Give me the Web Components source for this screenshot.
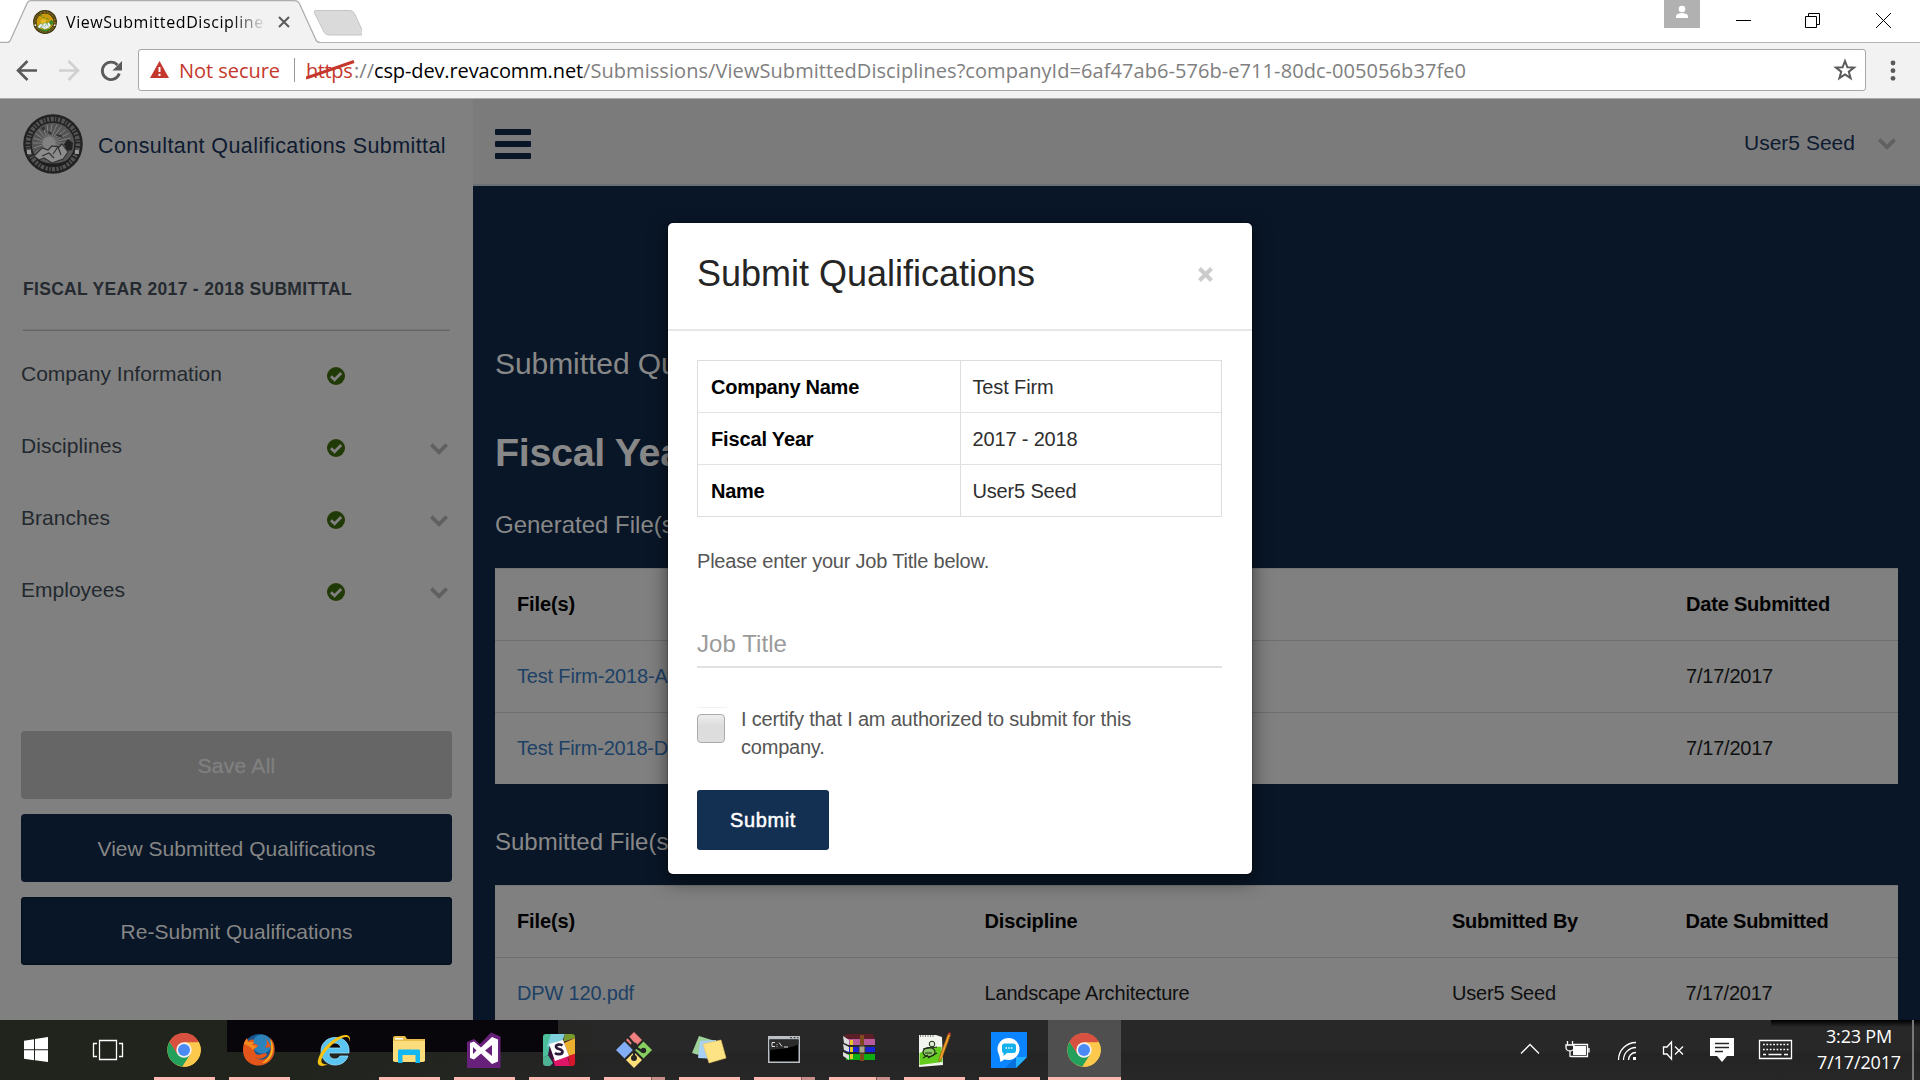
<!DOCTYPE html>
<html lang="en">
<head>
<meta charset="utf-8">
<title>ViewSubmittedDisciplines</title>
<style>
html,body{margin:0;padding:0}
body{width:1920px;height:1080px;overflow:hidden;background:#fff;font-family:"Liberation Sans",Arial,sans-serif;position:relative}
</style>
</head>
<body>
<app-window></app-window>
<script>
function define(name, html, setup){
  const t=document.createElement('template');
  t.innerHTML=html;
  customElements.define(name, class extends HTMLElement{
    constructor(){
      super();
      this.attachShadow({mode:'open'}).appendChild(t.content.cloneNode(true));
    }
    connectedCallback(){ if(setup) setup(this,this.shadowRoot); }
  });
}

define('seal-icon', `
<style>:host{display:block;line-height:0}svg{display:block;width:100%;height:100%}</style>
<svg viewBox="0 0 60 60">
 <circle cx="30" cy="30" r="29.8" style="fill:var(--rim,#222)"/>
 <circle cx="30" cy="30" r="25" fill="none" stroke-width="4.6" stroke-dasharray="2.2 1.5 3.2 1.2 1.4 1.6" style="stroke:var(--lettering,#545454)"/>
 <circle cx="30" cy="30" r="21.3" style="fill:var(--field,#555)"/>
 <g id="rays" stroke-width="1" style="stroke:var(--ray,#808080)"></g>
 <circle cx="26" cy="29" r="6.5" style="fill:var(--sun,#828282)"/>
 <path d="M18 14l3-2 1 3-2 2zM24 17l4 1 1 3-3-1zM33 20l5 1 2 3-6-2z" style="fill:var(--isle,#333)"/>
 <path d="M41 30l4-5 5 4-1 7-5 1z" style="fill:var(--isle,#222)"/>
 <path d="M11 42l8-8 6 2 4-4 7 1 3-3 6 8-5 7-11 4-8-5-5 2z" stroke-width="1.2" style="fill:var(--cloud,#8c8c8c);stroke:var(--isle,#333)"/>
 <path d="M19 42l7-3 5 5M30 40l5-7 3 8" fill="none" stroke-width="1.2" style="stroke:var(--isle,#333)"/>
 <path d="M14 45c8 5 20 7 33 0-3 5-9 8-17 8s-13-3-16-8z" style="fill:var(--isle,#1e1e1e)"/>
 <path d="M4 36h4v4H4zM52 36h4v4h-4z" style="fill:var(--cloud,#999)"/>
</svg>`, (h,s)=>{
  let o='';
  for(let i=0;i<24;i++){const a=i*Math.PI/12;o+='<line x1="26" y1="29" x2="'+(29+19*Math.cos(a)).toFixed(1)+'" y2="'+(29+19*Math.sin(a)).toFixed(1)+'"/>';}
  s.getElementById('rays').innerHTML=o;
});

define('chevron-icon', `
<style>:host{display:block;width:18px;height:12px;color:#5f6062}svg{display:block}</style>
<svg width="18" height="12" viewBox="0 0 18 12"><path d="M2.6.3 9 6.5 15.4.3 18 3 9 11.7 0 3z" fill="currentColor"/></svg>`);

define('tab-strip', `
<style>
:host{display:flex;height:43px;background:linear-gradient(#b4b4b4,#b4b4b4) 0 42px/100% 1px no-repeat #fff;justify-content:space-between}
.l{display:flex}
.tab{display:grid;width:320px;height:43px}
.tab>*{grid-area:1/1}
.c{display:flex;align-items:center;padding:0 0 1px 33px}
seal-icon{width:24px;height:24px;margin-top:2px;--rim:#3a300c;--lettering:#8a7526;--field:#c9980c;--ray:#d2a312;--sun:#e3bb2a;--isle:#2c8a2c;--cloud:#eee}
.t{width:199px;margin-left:9px;margin-top:1px;overflow:hidden;font:16px/24px "Open Sans","Noto Sans",sans-serif;color:#000;-webkit-mask-image:linear-gradient(90deg,#000 165px,transparent 200px)}
.x{margin-left:13px;margin-top:2px}
.r{display:flex}
svg{display:block}
</style>
<div class="l"><div class="tab">
<svg width="320" height="43"><path d="M0 43V42.5H8.5C9.5 42 10 41 10.5 40L27 3.5C28 1.5 29 .7 31 .7H294c3 0 4.500 1 5.500 3L316 40c.6 1.500 1.500 2.500 3 2.500V43z" fill="#f2f2f2"/><path d="M0 42.500H7.500C9.500 42.500 10 41 10.500 40L27 3.500C28 1.500 29 .7 31 .7H294c3 0 4.500 1 5.500 3L316 40c.6 1.500 1.500 2.500 4 2.500" fill="none" stroke="#aeaeae" stroke-width="1.300"/></svg>
<div class="c"><seal-icon></seal-icon><div class="t"><fit-text w="206">ViewSubmittedDisciplines</fit-text></div>
<svg class="x" width="12" height="12"><path d="M1 1l10 10M11 1L1 11" stroke="#5a5a5a" stroke-width="2"/></svg></div>
</div>
<svg width="50" height="43" style="margin-left:-8px"><path d="M4 10.500H37c3 0 4.500 1 5.500 3L51 32c.7 2-.3 3-2 3H18c-3 0-5-1-6-3L2.500 13C1.500 11 2.500 10.500 4 10.500z" fill="#dadada" stroke="#c4c4c4"/></svg></div>
<div class="r">
<svg width="256" height="43" fill="none" stroke="#000" stroke-width="1"><path d="M0 0h36v28H0z" fill="#b1b1b1" stroke="none"/><circle cx="18" cy="9" r="3.300" fill="#fff" stroke="none"/><path d="M12 18v-2c0-2 4-3 6-3s6 1 6 3v2z" fill="#fff" stroke="none"/><path d="M72 20.500h15M141.500 16.500h11v11h-11zM144.500 16.500v-3h11v11h-3M212 13l15 15M227 13l-15 15"/></svg>
</div>`);

define('nav-toolbar', `
<style>
:host{display:flex;align-items:center;height:55px;background:#f2f2f2;border-bottom:1px solid #ababab;font:20px/28px "Open Sans","Noto Sans",sans-serif}
.f{display:flex;align-items:center;box-sizing:border-box;width:1728px;height:42px;border:1px solid #a6a6a6;border-radius:3px;background:#fff;margin-left:14px;margin-top:-1px}
fit-text{padding-top:1px}
.ns{color:#c5372c;margin-left:9px}
.sep{width:1px;height:24px;background:#999;margin:0 11px 0 14px}
.h{display:grid}.h>*{grid-area:1/1}.h{color:#c5372c}
.g{color:#808080}.b{color:#000}
svg{display:block;flex:none}
.w{flex:1}
</style>
<svg width="124" height="54" fill="none" stroke-width="2.600"><path d="M37 26.500H19M27.500 17l-9.500 9.500 9.500 9.500" stroke="#5a5a5a"/><path d="M59 26.500H77M68.500 17l9.500 9.500-9.500 9.500" stroke="#d0d0d0"/><path d="M117.500 21A8.700 8.700 0 1 0 119.300 29.500" stroke="#5a5a5a" stroke-width="2.800"/><path d="M122 17v9.500h-9.500z" fill="#5a5a5a"/></svg>
<div class="f">
<svg width="21" height="18" style="margin-left:10px"><path d="M10.500 0L20 17H1z" fill="#c5372c"/><path d="M10.500 6v5M10.500 12.700v2.200" stroke="#fff" stroke-width="2"/></svg>
<fit-text class="ns" w="101">Not secure</fit-text><span class="sep"></span>
<div class="h"><fit-text w="48">https</fit-text><svg width="50" height="28"><path d="M0 22L48 5.500" stroke="#c5372c" stroke-width="3"/></svg></div>
<fit-text class="g" w="20" style="margin-left:-2px">://</fit-text><fit-text class="b" w="209">csp-dev.revacomm.net</fit-text><fit-text class="g" w="883">/Submissions/ViewSubmittedDisciplines?companyId=6af47ab6-576b-e711-80dc-005056b37fe0</fit-text>
<span class="w"></span>
<svg width="24" height="24" style="margin-right:8px"><path d="M12 3l2.400 6.300 6.600.3-5.200 4.100 1.800 6.500L12 16.500l-5.600 3.700 1.800-6.500L3 9.600l6.600-.3z" fill="none" stroke="#5a5a5a" stroke-width="2"/></svg>
</div>
<svg width="54" height="54" fill="#5a5a5a"><circle cx="27" cy="19" r="2.400"/><circle cx="27" cy="26.700" r="2.400"/><circle cx="27" cy="34.300" r="2.400"/></svg>`);

define('nav-item', `
<style>
:host{display:flex;align-items:center;height:72px;font-size:21px;line-height:28px;color:#23292f}
.l{width:306px}
.k{margin-top:4px;display:block}
chevron-icon{margin:6px 0 0 85px}
:host([leaf]) chevron-icon{display:none}
</style>
<div class="l"><slot></slot></div>
<svg class="k" width="18" height="18" viewBox="0 0 18 18"><circle cx="9" cy="9" r="9" fill="#1f3a06"/><path d="M4 9.300l3.500 3.400 6.700-6.700" fill="none" stroke="#808080" stroke-width="2.900"/></svg>
<chevron-icon></chevron-icon>`);

define('side-button', `
<style>
:host{display:flex;align-items:center;justify-content:center;box-sizing:border-box;height:68px;padding-top:3px;border-radius:4px;background:#091627;color:#868686;font-size:21px;line-height:28px;margin-bottom:15px}
:host([disabled]){background:#666;color:#808080;-webkit-text-stroke:.3px #808080}
:host([active]){box-shadow:inset 0 0 0 1.500px #05121e}
</style><slot></slot>`);

define('side-bar', `
<style>
:host{display:block;box-sizing:border-box;width:473px;height:921px;background:#808080;padding:0 21px;overflow:hidden}
.brand{display:flex;height:88px;align-items:center;color:#0d1a30;font-size:21.500px;line-height:28px}
.brand seal-icon{width:60px;height:60px;margin:1px 0 0 2px}
.brand fit-text{margin:6px 0 0 15px}
.fy{font-weight:bold;font-size:17.500px;line-height:20px;color:#242a30;padding:91.500px 0 30px 2px}
.hr{height:1px;background:#666;border-top:1px solid #747474;margin:0 2px 7px}
.btns{margin-top:105px}
</style>
<div class="brand"><seal-icon></seal-icon><fit-text w="348">Consultant Qualifications Submittal</fit-text></div>
<div class="fy"><fit-text w="329">FISCAL YEAR 2017 - 2018 SUBMITTAL</fit-text></div>
<div class="hr"></div>
<nav-item leaf><fit-text w="201">Company Information</fit-text></nav-item>
<nav-item><fit-text w="101">Disciplines</fit-text></nav-item>
<nav-item><fit-text w="89">Branches</fit-text></nav-item>
<nav-item><fit-text w="104">Employees</fit-text></nav-item>
<div class="btns">
<side-button disabled><fit-text w="78">Save All</fit-text></side-button>
<side-button><fit-text w="278">View Submitted Qualifications</fit-text></side-button>
<side-button active><fit-text w="232">Re-Submit Qualifications</fit-text></side-button>
</div>`);

define('top-bar', `
<style>
:host{display:flex;align-items:center;box-sizing:border-box;height:87px;background:#7b7b7b;border-bottom:2px solid #6c7176;padding:2px 24px 0 22px;color:#0d1a30;font-size:21px;line-height:28px}
.m{display:flex;flex-direction:column;gap:6px;width:36px;margin-top:2px}
.m i{height:6px;background:#081627;border-radius:1px}
.u{margin-left:auto}
chevron-icon{margin:2px 0 0 23px}
</style>
<div class="m"><i></i><i></i><i></i></div><fit-text class="u" w="111">User5 Seed</fit-text><chevron-icon></chevron-icon>`);

define('table-row', `
<style>
:host{display:flex;box-sizing:border-box;height:72px;align-items:center;border-top:1px solid #6e6e6e;color:#0f0f0f;font-size:20px;line-height:28px}
:host([head]){font-weight:bold;color:#000;border-top-color:#747474}
::slotted(*){box-sizing:border-box;padding-left:22px;flex-shrink:0;white-space:nowrap;margin-bottom:2px}
::slotted(.a){width:467.500px}::slotted(.w){width:1169px}::slotted(.h){width:233.500px}
::slotted(.link){color:#1d4066}
</style><slot></slot>`);

define('main-view', `
<style>
:host{display:block;flex:1;height:921px;background:#091627;overflow:hidden;color:#888}
.c{padding:0 22px}
.h1{font-size:30px;line-height:40px;padding-top:158px}
.h2{font-size:39.500px;line-height:50px;font-weight:bold;padding-top:43px;letter-spacing:-.35px}
.h3{font-size:24px;line-height:30px;padding-top:33px}
.t{background:#808080;margin-top:28px;height:216px;overflow:hidden}
.s{font-size:24px;line-height:30px;padding-top:43px}
</style>
<top-bar></top-bar>
<div class="c">
<div class="h1"><fit-text w="322">Submitted Qualifications</fit-text></div>
<div class="h2">Fiscal Year 2017 - 2018</div>
<div class="h3">Generated File(s)</div>
<div class="t">
<table-row head><div class="w"><fit-text w="58">File(s)</fit-text></div><div class="h"><fit-text w="144">Date Submitted</fit-text></div></table-row>
<table-row><div class="w link"><fit-text w="156">Test Firm-2018-Af</fit-text></div><div class="h"><fit-text w="87">7/17/2017</fit-text></div></table-row>
<table-row><div class="w link"><fit-text w="151">Test Firm-2018-D</fit-text></div><div class="h"><fit-text w="87">7/17/2017</fit-text></div></table-row>
</div>
<div class="s">Submitted File(s)</div>
<div class="t">
<table-row head><div class="a"><fit-text w="58">File(s)</fit-text></div><div class="a"><fit-text w="93">Discipline</fit-text></div><div class="h"><fit-text w="126">Submitted By</fit-text></div><div class="h"><fit-text w="143">Date Submitted</fit-text></div></table-row>
<table-row><div class="a link"><fit-text w="117">DPW 120.pdf</fit-text></div><div class="a"><fit-text w="205">Landscape Architecture</fit-text></div><div class="h"><fit-text w="104">User5 Seed</fit-text></div><div class="h"><fit-text w="87">7/17/2017</fit-text></div></table-row>
</div>
</div>`);

define('submit-dialog', `
<style>
:host{display:block;position:absolute;left:668px;top:223px;width:584px;height:651px;background:#fff;border-radius:5px;box-shadow:0 6px 19px rgba(0,0,0,.55),0 0 2px rgba(0,0,0,.5);color:#555;font-size:20px;line-height:28px}
.hd{display:flex;box-sizing:border-box;height:108px;padding:31px 39px 0 29px;justify-content:space-between;border-bottom:2px solid #e7e7e7;color:#252525;font-size:36px;line-height:40px}
.x{margin-top:13px;display:block}
.bd{padding:29px 29px 0}
.tb{border:1px solid #ddd;box-sizing:border-box;width:525px}
.r{display:flex;height:51px;border-top:1px solid #e2e2e2;line-height:52px}
.r:first-child{border-top:0}
.r>*{box-sizing:border-box;padding-left:13px;width:50%}
.r b{color:#000}.r span{color:#2e2e2e;border-left:1px solid #ddd;padding-left:12px}
.p{margin-top:30px}
.in{margin-top:47px;width:525px;height:44px;border-bottom:2px solid #e2e2e2;font-size:24px;line-height:44px;color:#9b9b9b}
.ck{display:flex;margin-top:38px}
.ct{margin-top:-1px}
.box{width:30px;height:46px;border-top:1.500px solid #f1f1f1;margin-top:1px;margin-right:14px;box-sizing:border-box;padding-top:6px}
.box i{display:block;box-sizing:border-box;width:28px;height:29px;border:1.500px solid #aaa;border-radius:4px;background:linear-gradient(#eee,#dcdcdc 40%,#dedede)}
.b{display:flex;align-items:center;justify-content:center;width:132px;height:60px;margin-top:29px;border-radius:3px;background:#132f52;color:#fff;-webkit-text-stroke:.5px #fff}
</style>
<div class="hd"><fit-text w="338">Submit Qualifications</fit-text><svg class="x" width="15" height="15"><path d="M1.500 1.500l12 12M13.500 1.500l-12 12" stroke="#ccc" stroke-width="4.200"/></svg></div>
<div class="bd">
<div class="tb">
<div class="r"><b><fit-text w="148">Company Name</fit-text></b><span><fit-text w="81">Test Firm</fit-text></span></div>
<div class="r"><b><fit-text w="102.500">Fiscal Year</fit-text></b><span><fit-text w="105">2017 - 2018</fit-text></span></div>
<div class="r"><b><fit-text w="53.500">Name</fit-text></b><span><fit-text w="104">User5 Seed</fit-text></span></div>
</div>
<div class="p"><fit-text w="292">Please enter your Job Title below.</fit-text></div>
<div class="in"><fit-text w="90">Job Title</fit-text></div>
<div class="ck"><div class="box"><i></i></div><div class="ct"><fit-text w="390">I certify that I am authorized to submit for this</fit-text><br><fit-text w="83.500">company.</fit-text></div></div>
<div class="b"><fit-text w="66">Submit</fit-text></div>
</div>`);

const chrome='<circle cx="18" cy="18" r="16.700" fill="#fcc94d"/><path d="M18 18L3.500 9.700A16.700 16.700 0 0 1 32.500 9.700z" fill="#d8503f"/><path d="M3.500 9.700A16.700 16.700 0 0 0 16.500 34.600L24.500 22 10.500 20z" fill="#23a05c"/><path d="M18 10.200H32.800A16.700 16.700 0 0 0 3.500 9.700l7.600 12z" fill="#d8503f"/><path d="M18 10.200H32.800A16.700 16.700 0 0 1 16.500 34.600L24.700 22z" fill="#fcc94d"/><circle cx="18" cy="18" r="7.700" fill="#f4f0ec"/><circle cx="18" cy="18" r="6" fill="#4a8af4"/>';
const icons={
chrome,
firefox:'<circle cx="18" cy="17.500" r="15.500" fill="#15568f"/><circle cx="21" cy="12" r="9.500" fill="#2b83bd"/><path d="M20 3c7 3 7 9 4 13l5-1c2-3 1-8-1-10 5 4 6 9 5.500 14-1 9-8 14.500-16 14.500C8 33.500 2 26.500 2 18c0-6 2-10 4-12l1 3c2-1 4-2 6-1l-1 3 5 2c0 2-2 3-4 4 0 5 4 7 8 5 3-1 5-1 5 1-3 4-9 5-12 2 5 5 13 3 15-5 2-6-1-12-9-17z" fill="#e2561c"/><path d="M29 7c4 5 4 14 0 19-2 3-5 5-8 5 9-6 11-13 8-24z" fill="#f9b61c"/><path d="M3 12c1-3 2-4 3-5l1 3 6 0-2 3 5 1c-1 2-3 2-4 4-2-3-6-5-9-6z" fill="#f58a1f"/>',
ie:'<path d="M19 5.500c-8 0-14 6-14 13.500S11 33 19 33c6 0 11-3 13-9h-8c-1 2-3 3-5 3-3 0-6-2-6-6h20C34 11 28 5.500 19 5.500zM13 16c0-3 3-5 6-5s5 2 6 5z" fill="#5bc5f2" stroke="#9ae0fb" stroke-width=".8"/><path d="M33.500 10c2-6-2-8.500-9-6C14 8 4 19 2 28c-1.500 7 5 7 10 4-5 1-8-1-6-6C9 18 19 9 26 6c5-2 8-1 7.500 4z" fill="#f7c211"/>',
folder:'<path d="M2 6c0-1 .6-2 2-2h10l2 3H34v22H2z" fill="#e8bd49"/><path d="M2 9h32v19c0 1-1 2-2 2H4c-1 0-2-1-2-2z" fill="#fbdd7c"/><path d="M4 6h8v1.500H4z" fill="#fff"/><path d="M7 31V19c0-1 .6-1.500 1.500-1.500h19c1 0 1.500.5 1.500 1.500v12h-4.500v-8H11.500v8z" fill="#12b8f2"/>',
vs:'<path d="M1 10l7-3 6 5L25 .500l9.500 4V36H1z" fill="#68217a"/><path d="M4 11l4-1.500 7 6L26 5l6 2.500v22L26 32 15 21.500l-7 6L4 26zM7 15v7l3.500-3.500zM26 13l-7 5.500 7 5.500z" fill="#fff" fill-rule="evenodd"/>',
slack:'<rect x="2" y="2" width="32" height="32" rx="3" fill="#3a1238"/><path d="M2 5c0-2 1-3 3-3h6L7 23 2 26z" fill="#4cc09c"/><path d="M10 2h14l-3 8-15 5z" fill="#7fcfdc"/><path d="M24 2h7c2 0 3 1 3 3v1l-12 4z" fill="#799a2c"/><path d="M34 6v16l-6 2-5-13z" fill="#ebb02d"/><path d="M2 26l5-3 5 8-3 3H5c-2 0-3-1-3-3z" fill="#4cb493"/><path d="M12 27l14-4 3 11H14z" fill="#df1567"/><path d="M27 24l7-2v9c0 2-1 3-3 3h-2z" fill="#d8172c"/><path d="M8 12l14-4 6 16-14 5z" fill="#fff"/><path d="M21.500 13.500c-2-1.500-6.500-1.500-6.500 1.300s6.500 1.700 6.500 4.900-5.500 3-7.500 1.200" fill="none" stroke="#2b1a38" stroke-width="2.700"/>',
git:'<path d="M18 0l8 8-8 8-8-8z" fill="#f08080"/><path d="M27.500 9.500l8.500 8.500-8.500 8.500L19 18z" fill="#87cf5e"/><path d="M18 20l8 8-8 8-8-8z" fill="#fee07a"/><path d="M8.500 9.500L17 18l-8.500 8.500L0 18z" fill="#83adf7"/><path d="M12 5l6 7v15M18 14l9 6" stroke="#262626" stroke-width="2.200" fill="none"/><circle cx="18" cy="14" r="3.400" fill="#262626"/><circle cx="27.500" cy="18.500" r="2.700" fill="#262626"/><circle cx="18" cy="26" r="3" fill="#262626"/>',
notes:'<path d="M8 4l16 5-6 17L1 21z" fill="#9fd29a"/><path d="M9 9l16-1-1 19-17-1z" fill="#a9d0f5"/><path d="M12 12l18-4 5 18-17 5z" fill="#fde384" stroke="#e8c860" stroke-width=".6"/>',
cmd:'<path d="M2 4h32v27H2z" fill="#b9bfc4"/><path d="M3.500 7.500h29v22h-29z" fill="#000"/><path d="M3.500 7.500h29v5C22 17 14 17 3.500 18z" fill="#2b2b2b"/><path d="M9 10.500H6v4h3M11 12v.8M11 14v.8M13 10.500l3 4M18 15h4" stroke="#ddd" fill="none"/><path d="M24 5.700h2M27.500 5.700h2M31 5.700h1.500" stroke="#333"/>',
rar:'<path d="M3 3l5-1h24l2 7H5z" fill="#5c1f28"/><path d="M6 7h28v6H6z" fill="#b85a9c"/><path d="M5 15h29v5H5z" fill="#1820d8"/><path d="M5 22h29v6H5z" fill="#0cae14"/><path d="M2 4l6 4v5l-5-2zM2 12l6 3v5l-5-2zM2 20l6 3v5l-6-4z" fill="#ddd"/><path d="M9 8h3v5H9zM9 15h3v5H9zM9 22h3v5H9z" fill="#e3c62a"/><path d="M19 3h4v26h-4z" fill="#7c4a1e"/><path d="M18 14h6v7h-6z" fill="#a9a288" stroke="#333"/>',
npp:'<path d="M3 3h17l6 2 1 28-24 2z" fill="#f2f5ee"/><path d="M3.500 21c7-2 13-7 22-6l1 15-23 3z" fill="#64cc1e"/><path d="M4 4h15" stroke="#888" stroke-width="2" stroke-dasharray="1 1.500"/><ellipse cx="13" cy="20" rx="6" ry="4.500" fill="#8cc765" stroke="#1e2c14" stroke-width="1.200"/><circle cx="16" cy="12" r="2.800" fill="#dcead2" stroke="#1e2c14"/><path d="M7 17l14-2M7 26l5-3M12 26l9-5M9 21h7" stroke="#1e2c14" stroke-width="1.200" fill="none"/><path d="M32 2l2.500 1L26 26l-3 4 .5-5z" fill="#f09e28" stroke="#8a4d12" stroke-width=".6"/><path d="M32 2l.8-1.800 2.400 1L34.500 3z" fill="#c43a2a"/>',
chat:'<path d="M0 0h36v25L25 36H0z" fill="#0a84ff"/><path d="M25 25v11H14z" fill="#0670dc"/><path d="M25 25h11L25 36z" fill="#22b0ff"/><circle cx="17.500" cy="17" r="11" fill="#fff"/><path d="M8 22l1.500 8 6-4z" fill="#fff"/><path d="M13.500 11.500h9c1.500 0 2.500 1 2.500 2.500v4.500c0 1.500-1 2.500-2.500 2.500H16l-3.500 3v-3c-1 0-1.500-1-1.500-2.500V14c0-1.500 1-2.500 2.500-2.500z" fill="#12b1ee"/><path d="M14.500 16h7" stroke="#fff" stroke-width="1.500" stroke-dasharray="1.500 1.200"/>'
};

define('task-icon', `
<style>
:host{display:flex;flex-direction:column;align-items:center;box-sizing:border-box;width:75px;height:60px;padding-top:12px}
svg{display:block;width:36px;height:36px;margin-right:2px}
.u{display:flex;width:61px;height:3px;background:#fdb9b2;margin-top:9px;justify-content:flex-end}
:host([nobar]) .u{visibility:hidden}
:host([multi]) .u{background:linear-gradient(90deg,#fdb9b2 47px,#7f5c5a 47px,#7f5c5a 48px,#c98f8b 48px)}
:host([active]){width:73px;margin:0 1px;background:#4f4f4f}
:host([active]) .u{width:73px}
</style><svg viewBox="0 0 36 36"></svg><div class="u"></div>`, (h,s)=>{ s.querySelector('svg').innerHTML=icons[h.getAttribute('icon')]; });

define('task-bar', `
<style>
:host{display:flex;height:60px;color:#fff;font:19px/26px "Open Sans","Noto Sans",sans-serif;
background:linear-gradient(#08060a,#08060a) 227px 0/331px 32px no-repeat,linear-gradient(#000,rgba(30,30,30,0)) 1771px 0/149px 7px no-repeat,linear-gradient(90deg,rgba(32,36,28,1) 0,rgba(32,36,28,1) 240px,rgba(32,36,28,0) 640px),linear-gradient(#282828 32px,#242424 33px,#272727)}
svg{display:block;flex:none}
.tray{margin-left:auto;display:flex}
.clock{box-sizing:border-box;width:94px;padding-left:4px;text-align:center;padding-top:3px;font-size:18px}
.end{border-left:2px solid #777;margin-left:8px;padding-right:6px}
</style>
<svg width="147" height="60"><path d="M24 20.700l10-1.500v10H24zM35 19l13-2v12.200H35zM24 30.200h10v10l-10-1.400zM35 30.200h13V42l-13-1.700z" fill="#fff"/><path d="M99.500 20.500h17v19h-17zM97 23.500h-3.500v13H97M119 23.500h3.500v13H119" fill="none" stroke="#fff" stroke-width="1.300"/></svg>
<task-icon icon="chrome"></task-icon><task-icon icon="firefox"></task-icon><task-icon icon="ie" nobar></task-icon><task-icon icon="folder"></task-icon><task-icon icon="vs"></task-icon><task-icon icon="slack"></task-icon><task-icon icon="git" multi></task-icon><task-icon icon="notes"></task-icon><task-icon icon="cmd" multi></task-icon><task-icon icon="rar" multi></task-icon><task-icon icon="npp"></task-icon><task-icon icon="chat"></task-icon><task-icon icon="chrome" active></task-icon>
<div class="tray">
<svg width="300" height="60" viewBox="1510 0 300 60" fill="none" stroke="#fff" stroke-width="1.300">
<path d="M1521 33.500l9-9 9 9"/>
<path d="M1570.500 36.500h17v-12h-15M1589 28v4.500"/><path d="M1573 26h13v9h-13z" fill="#fff" stroke="none"/><path d="M1566 25h8v2.500c0 2-2 3.500-4 3.500s-4-1.500-4-3.500zM1567.500 25v-4M1572.500 25v-4M1570 31v6"/>
<path d="M1618.500 40c0-10 8-17.500 17.500-17.500M1623.500 40c0-7 5.500-12.500 12.500-12.500M1628.500 40c0-4 3-7.500 7.500-7.500"/><path d="M1633 37h3v3h-3z" fill="#fff" stroke="none"/>
<path d="M1663.500 27h3.500l4.500-5v17l-4.500-5h-3.500zM1675 26.500l8 8M1683 26.500l-8 8"/>
<path d="M1710 18h24v18h-7l-5 6-5-6h-7z" fill="#fff" stroke="none"/><path d="M1715 23.500h14M1715 27.500h14M1715 31.500h8" stroke="#262626"/>
<path d="M1759.500 20.500h32v18h-32z"/><path d="M1763 24.500h26M1763 29.500h26" stroke-width="1.500" stroke-dasharray="1.700 1.700"/><path d="M1763 34.500h3M1768.500 34.500h13M1784 34.500h4"/></svg>
<div class="clock"><fit-text w="66">3:23 PM</fit-text><br><fit-text w="84">7/17/2017</fit-text></div><div class="end"></div>
</div>`);

define('app-window', `
<style>:host{display:block;width:1920px;height:1080px;position:relative;overflow:hidden}.p{display:flex;height:921px}</style>
<tab-strip></tab-strip><nav-toolbar></nav-toolbar>
<div class="p"><side-bar></side-bar><main-view></main-view></div>
<task-bar></task-bar>
<submit-dialog></submit-dialog>`);

/* Inline text whose tracking is adjusted so the run takes the width given in "w". */
define('fit-text', `<style>:host{display:inline-block;white-space:nowrap;vertical-align:top}</style><slot></slot>`, h=>{
  const n=h.textContent.length, w=+h.getAttribute('w');
  if(w) h.style.letterSpacing=((w-h.getBoundingClientRect().width)/n).toFixed(3)+'px';
});
</script>
</body>
</html>
